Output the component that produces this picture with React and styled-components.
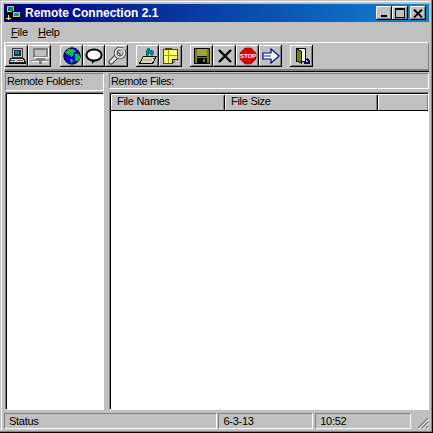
import React from 'react'
import styled, { createGlobalStyle } from 'styled-components'

const GRAY = '#c0c0c0'
const DARK = '#808080'

const Global = createGlobalStyle`
  html, body { margin: 0; padding: 0; background: ${GRAY}; }
  body { font-family: "Liberation Sans", Arial, sans-serif; overflow: hidden; }
`

const Win = styled.div`
  box-sizing: border-box;
  width: 433px;
  height: 433px;
  background: ${GRAY};
  display: flex;
  flex-direction: column;
  padding: 4px 4px 4px 4px;
  box-shadow: inset -1px -1px 0 #000, inset -2px -2px 0 ${DARK}, inset 1px 1px 0 ${GRAY}, inset 2px 2px 0 #fff;
`

const TitleBar = styled.div`
  height: 18px;
  flex: none;
  display: flex;
  align-items: center;
  padding: 0 3px 0 1px;
  background: linear-gradient(90deg, #000080, #1084d0);
  color: #fff;
`

const TitleText = styled.span`
  font-size: 12px;
  font-weight: bold;
  margin-left: 4px;
  flex: 1;
  white-space: nowrap;
`

const CapButton = styled.div`
  box-sizing: border-box;
  width: 16px;
  height: 14px;
  margin-left: ${(p) => p.gap || 0}px;
  background: ${GRAY};
  box-shadow: inset -1px -1px 0 #000, inset 1px 1px 0 #fff, inset -2px -2px 0 ${DARK};
  display: flex;
  align-items: center;
  justify-content: center;
`

const MenuBar = styled.div`
  height: 20px;
  flex: none;
  display: flex;
  align-items: center;
  gap: 10px;
  padding-left: 7px;
  font-size: 11px;
  letter-spacing: -0.2px;
  color: #000;
`

const Key = styled.span`
  text-decoration: underline;
`

const ToolBar = styled.div`
  box-sizing: border-box;
  height: 29px;
  flex: none;
  display: flex;
  align-items: flex-start;
  padding: 2px 0 0 0;
  border-top: 1px solid #fff;
  border-left: 1px solid #fff;
  border-right: 1px solid ${DARK};
  border-bottom: 2px solid ${DARK};
`

const ToolGroup = styled.div`
  display: flex;
  margin-right: ${(p) => p.space}px;
`

const ToolButton = styled.div`
  box-sizing: border-box;
  width: ${(p) => p.w || 23}px;
  height: 22px;
  background: ${GRAY};
  box-shadow: inset -1px -1px 0 #000, inset 1px 1px 0 #fff, inset -2px -2px 0 ${DARK};
  display: flex;
  align-items: center;
  justify-content: center;
`

const Panes = styled.div`
  flex: 1;
  display: flex;
  min-height: 0;
  padding-top: 1px;
  border-top: 1px solid #000;
  margin: 0 0 0 1px;
`

const FolderPane = styled.div`
  width: 99px;
  flex: none;
  display: flex;
  flex-direction: column;
  margin-right: 5px;
`

const FilePane = styled.div`
  flex: 1;
  display: flex;
  flex-direction: column;
  min-width: 0;
`

const PaneLabel = styled.div`
  box-sizing: border-box;
  height: ${(p) => p.h}px;
  flex: none;
  padding: 0 1px;
  font-size: 11px;
  letter-spacing: -0.38px;
  line-height: 14px;
  color: #000;
  white-space: nowrap;
  border-top: 1px solid ${DARK};
  border-left: 1px solid ${DARK};
  border-bottom: 1px solid #fff;
  border-right: 1px solid #fff;
`

const ListBox = styled.div`
  flex: 1;
  margin-top: ${(p) => p.top}px;
  background: #fff;
  box-sizing: border-box;
  border-top: 1px solid ${DARK};
  border-left: 1px solid ${DARK};
  border-bottom: 1px solid #fff;
  border-right: 1px solid #fff;
  box-shadow: inset 1px 1px 0 #000;
  padding: 1px 0 0 1px;
`

const ListHead = styled.div`
  display: flex;
  height: 17px;
  box-sizing: border-box;
  border-bottom: 1px solid #000;
  background: ${GRAY};
`

const HeadCell = styled.div`
  box-sizing: border-box;
  width: ${(p) => p.w}px;
  flex: ${(p) => (p.w ? 'none' : 1)};
  height: 16px;
  padding-left: 6px;
  font-size: 11px;
  letter-spacing: -0.28px;
  line-height: 15px;
  color: #000;
  box-shadow: inset 1px 1px 0 #fff, inset -1px 0 0 ${(p) => (p.w ? '#000' : DARK)}, inset -2px 0 0 ${(p) => (p.w ? DARK : GRAY)};
`

const StatusBar = styled.div`
  height: 19px;
  flex: none;
  display: flex;
  align-items: flex-end;
`

const StatusCell = styled.div`
  box-sizing: border-box;
  width: ${(p) => p.w}px;
  margin-right: ${(p) => p.space || 0}px;
  height: 16px;
  padding-left: 4px;
  font-size: 11px;
  letter-spacing: -0.28px;
  line-height: 15px;
  color: #000;
  border-top: 1px solid ${DARK};
  border-left: 1px solid ${DARK};
  border-bottom: 1px solid #fff;
  border-right: 1px solid #fff;
`

const Grip = styled.svg`
  display: block;
  margin-left: 6px;
  flex: none;
`

const Icon = ({ children }) => (
  <svg width="18" height="18" viewBox="0 0 18 18" shapeRendering="crispEdges">{children}</svg>
)

const AppIcon = () => (
  <svg width="16" height="16" viewBox="0 0 16 16" shapeRendering="crispEdges" style={{ flex: 'none' }}>
    <rect x="1.5" y="0.5" width="8" height="7" fill={GRAY} stroke="#000" />
    <rect x="3" y="2" width="5" height="4" fill="#008080" />
    <rect x="0" y="8" width="10" height="2" fill="#000" />
    <rect x="7.5" y="6.5" width="8" height="6" fill={GRAY} stroke="#000" />
    <rect x="9" y="8" width="5" height="3" fill="#00a0a0" />
    <rect x="6" y="13" width="10" height="2" fill="#000" />
    <rect x="3" y="10" width="1" height="5" fill="#ffff00" />
    <rect x="1" y="13" width="5" height="1" fill="#ffff00" />
  </svg>
)

const Computer = () => (
  <Icon>
    <rect x="4.5" y="1.5" width="10" height="9" fill={GRAY} stroke="#404040" />
    <rect x="6" y="3" width="7" height="6" fill="#203040" />
    <rect x="7" y="4" width="4" height="3" fill="#2080a0" />
    <path d="M2.5 11.5h13l2 4h-16z" fill="#d8d8d8" stroke="#202020" />
    <rect x="3" y="13" width="4" height="1" fill="#008080" />
    <rect x="9" y="13" width="6" height="1" fill="#606060" />
    <rect x="1" y="16" width="17" height="1" fill="#000" />
  </Icon>
)

const ComputerOff = () => (
  <Icon>
    <path d="M2.5 1.5h13v8h-13z" fill="none" stroke={DARK} strokeWidth="2" />
    <rect x="3" y="10" width="14" height="1" fill="#fff" />
    <rect x="17" y="1" width="1" height="10" fill="#fff" />
    <rect x="5" y="11" width="9" height="2" fill={DARK} />
    <rect x="0" y="13" width="18" height="1" fill={DARK} />
    <rect x="1" y="14" width="17" height="1" fill="#fff" />
    <rect x="8" y="14" width="3" height="3" fill={DARK} />
  </Icon>
)

const Globe = () => (
  <Icon>
    <circle cx="9" cy="9" r="8.2" fill="#0000e0" stroke="#000" shapeRendering="auto" />
    <path d="M5 2h6l1 2-2 2 1 2-3 2-2-2-3-1-1-2z" fill="#00c040" />
    <path d="M12 7h4l1 4-3 4-2-2z" fill="#00c040" />
    <path d="M7 12h2l1 2-2 2z" fill="#00c040" />
  </Icon>
)

const Bubble = () => (
  <Icon>
    <ellipse cx="9" cy="8" rx="7.6" ry="5.6" fill="#fff" stroke="#000" strokeWidth="2" shapeRendering="auto" />
    <path d="M7 13v4l4-4z" fill="#000" shapeRendering="auto" />
  </Icon>
)

const Wrench = () => (
  <Icon>
    <g shapeRendering="auto" fill="none">
      <path d="M3 15L10 8" stroke="#404040" strokeWidth="5" strokeLinecap="round" />
      <path d="M3 15L10 8" stroke="#e8e8e8" strokeWidth="3" strokeLinecap="round" />
      <circle cx="12" cy="6" r="4.4" stroke="#404040" strokeWidth="3.6" />
      <circle cx="12" cy="6" r="4.4" stroke="#e8e8e8" strokeWidth="2" />
      <path d="M13 5l4-4" stroke={GRAY} strokeWidth="2.6" />
    </g>
  </Icon>
)

const Scanner = () => (
  <Icon>
    <path d="M4.5 9.5h13l-4 7H.5z" fill="#d8d8d8" stroke="#000" />
    <path d="M4 12h9l-1 2H3z" fill="#d0c060" />
    <rect x="14" y="11" width="2" height="1" fill="#404040" />
    <path d="M7 9V4l2-3 2 1-1 2 2-1 3 2-1 3h-2l-1-2-2 1v2z" fill="#008888" stroke="#004848" strokeWidth="0.5" />
  </Icon>
)

const Notes = () => (
  <Icon>
    <path d="M3 2V1h6v1" fill="none" stroke="#404040" />
    <path d="M1.5 2.5h14v9l-5 5h-9z" fill="#ffff70" stroke="#404040" />
    <path d="M6.5 3v13M2 8.5h13" stroke="#a0a000" fill="none" />
    <path d="M10.5 16v-4h5" stroke="#000" fill="#c0c000" />
  </Icon>
)

const Floppy = () => (
  <Icon>
    <rect x="1" y="1" width="16" height="16" fill="#000" />
    <rect x="2" y="2" width="14" height="14" fill="#808000" />
    <rect x="4" y="2" width="10" height="7" fill="#a0a040" />
    <rect x="4" y="9" width="10" height="1" fill="#000" />
    <rect x="4" y="11" width="10" height="5" fill="#000" />
    <rect x="10" y="12" width="2" height="3" fill="#808000" />
  </Icon>
)

const Cross = () => (
  <Icon>
    <path d="M3 3l12 12M15 3L3 15" stroke="#000" strokeWidth="2.4" fill="none" shapeRendering="auto" />
  </Icon>
)

const Stop = () => (
  <Icon>
    <path d="M6 1h6l5 5v6l-5 5H6l-5-5V6z" fill="#e00000" stroke="#800000" strokeWidth="0.6" shapeRendering="auto" />
    <text x="9" y="11" textAnchor="middle" fontSize="6" fontWeight="bold" fill="#fff" fontFamily="Liberation Sans">STOP</text>
  </Icon>
)

const Arrow = () => (
  <Icon>
    <path d="M1 6h8V2l8 7-8 7v-4H1z" fill="#fff" stroke="#000080" strokeWidth="1.2" shapeRendering="auto" />
    <path d="M2 8h7v2H2z" fill="#9090e0" />
  </Icon>
)

const Door = () => (
  <Icon>
    <rect x="3.5" y="1.5" width="9" height="13" fill="#fff" stroke="#000" />
    <path d="M3.5 1.5l5 3v12l-5-3z" fill="#808000" stroke="#000" />
    <path d="M11 16h5M14 12l2 2v3" stroke="#000080" strokeWidth="1.5" fill="none" />
  </Icon>
)

export default function App() {
  return (
    <Win>
      <Global />
      <TitleBar>
        <AppIcon />
        <TitleText>Remote Connection 2.1</TitleText>
        <CapButton>
          <svg width="8" height="8" shapeRendering="crispEdges"><rect x="1" y="6" width="6" height="2" fill="#000" /></svg>
        </CapButton>
        <CapButton>
          <svg width="10" height="10" shapeRendering="crispEdges"><rect x="0.5" y="1.5" width="9" height="8" fill="none" stroke="#000" /><rect x="0" y="0" width="10" height="2" fill="#000" /></svg>
        </CapButton>
        <CapButton gap={2}>
          <svg width="10" height="9"><path d="M1 0.5l8 8M9 0.5l-8 8" stroke="#000" strokeWidth="1.8" fill="none" /></svg>
        </CapButton>
      </TitleBar>
      <MenuBar>
        <span><Key>F</Key>ile</span>
        <span><Key>H</Key>elp</span>
      </MenuBar>
      <ToolBar>
        <ToolGroup space={9}>
          <ToolButton><Computer /></ToolButton>
          <ToolButton><ComputerOff /></ToolButton>
        </ToolGroup>
        <ToolGroup space={8}>
          <ToolButton><Globe /></ToolButton>
          <ToolButton w={22}><Bubble /></ToolButton>
          <ToolButton><Wrench /></ToolButton>
        </ToolGroup>
        <ToolGroup space={8}>
          <ToolButton><Scanner /></ToolButton>
          <ToolButton><Notes /></ToolButton>
        </ToolGroup>
        <ToolGroup space={8}>
          <ToolButton><Floppy /></ToolButton>
          <ToolButton><Cross /></ToolButton>
          <ToolButton><Stop /></ToolButton>
          <ToolButton><Arrow /></ToolButton>
        </ToolGroup>
        <ToolButton><Door /></ToolButton>
      </ToolBar>
      <Panes>
        <FolderPane>
          <PaneLabel h={18}>Remote Folders:</PaneLabel>
          <ListBox top={1} />
        </FolderPane>
        <FilePane>
          <PaneLabel h={16}>Remote Files:</PaneLabel>
          <ListBox top={3}>
            <ListHead>
              <HeadCell w={114}>File Names</HeadCell>
              <HeadCell w={153}>File Size</HeadCell>
              <HeadCell />
            </ListHead>
          </ListBox>
        </FilePane>
      </Panes>
      <StatusBar>
        <StatusCell w={214} space={1}>Status</StatusCell>
        <StatusCell w={95} space={2}>6-3-13</StatusCell>
        <StatusCell w={96}>10:52</StatusCell>
        <Grip width="12" height="12" viewBox="0 0 12 12">
          <path d="M11 1L1 11M11 5L5 11M11 9L9 11" stroke={DARK} strokeWidth="1.4" fill="none" />
          <path d="M12 2L2 12M12 6L6 12M12 10L10 12" stroke="#fff" strokeWidth="0.8" fill="none" />
        </Grip>
      </StatusBar>
    </Win>
  )
}
